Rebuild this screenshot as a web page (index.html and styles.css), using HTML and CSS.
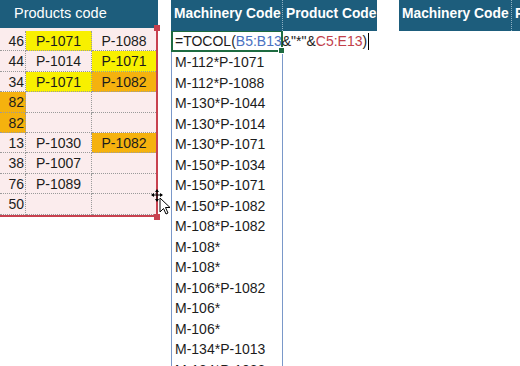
FILE: index.html
```html
<!DOCTYPE html>
<html>
<head>
<meta charset="utf-8">
<link rel="stylesheet" href="styles.css">
</head>
<body>
<div class="sheet">
  <div class="left">
    <div class="lhead">Products code</div>
    <div class="grid">
      <div class="c c1">46</div><div class="c yel">P-1071</div><div class="c">P-1088</div>
      <div class="c c1">44</div><div class="c">P-1014</div><div class="c yel">P-1071</div>
      <div class="c c1">34</div><div class="c yel">P-1071</div><div class="c org">P-1082</div>
      <div class="c c1 org">82</div><div class="c"></div><div class="c"></div>
      <div class="c c1 org">82</div><div class="c"></div><div class="c"></div>
      <div class="c c1">13</div><div class="c">P-1030</div><div class="c org">P-1082</div>
      <div class="c c1">38</div><div class="c">P-1007</div><div class="c"></div>
      <div class="c c1">76</div><div class="c">P-1089</div><div class="c"></div>
      <div class="c c1">50</div><div class="c"></div><div class="c"></div>
    </div>
    <span class="handle h-top"></span>
    <span class="handle h-bot"></span>
    <svg class="cursor" width="22" height="26" viewBox="0 0 22 26">
      <path d="M6 1 L6 12 M1 6 L11 6" stroke="#000" stroke-width="1.2" fill="none"/>
      <path d="M6 0 L4 3 L8 3 Z M6 13 L4 10 L8 10 Z M0 6 L3 4 L3 8 Z M12 6 L9 4 L9 8 Z" fill="#000"/>
      <path d="M9 9 L9 23 L12.5 19.5 L15 25 L17 24 L14.5 18.5 L19 18.5 Z" fill="#fff" stroke="#000" stroke-width="1"/>
    </svg>
  </div>
  <div class="mid">
    <div class="head">
      <div class="hc hc-m">Machinery Code</div>
      <div class="hc hc-p">Product Code</div>
    </div>
    <div class="formula">=TOCOL(<span class="ref-b">B5:B13</span>&amp;"*"&amp;<span class="ref-r">C5:E13</span>)<span class="caret"></span><span class="fill-handle"></span></div>
    <div class="spill">
      <div class="item">M-112*P-1071</div>
      <div class="item">M-112*P-1088</div>
      <div class="item">M-130*P-1044</div>
      <div class="item">M-130*P-1014</div>
      <div class="item">M-130*P-1071</div>
      <div class="item">M-150*P-1034</div>
      <div class="item">M-150*P-1071</div>
      <div class="item">M-150*P-1082</div>
      <div class="item">M-108*P-1082</div>
      <div class="item">M-108*</div>
      <div class="item">M-108*</div>
      <div class="item">M-106*P-1082</div>
      <div class="item">M-106*</div>
      <div class="item">M-106*</div>
      <div class="item">M-134*P-1013</div>
      <div class="item">M-134*P-1082</div>
    </div>
  </div>
  <div class="right">
    <div class="head">
      <div class="hc hc-m">Machinery Code</div>
      <div class="hc hc-p">Product Code</div>
    </div>
  </div>
</div>
</body>
</html>
```
FILE: styles.css
```css
html, body {
  margin: 0;
  padding: 0;
  background: #fff;
  width: 520px;
  height: 366px;
  overflow: hidden;
}
body {
  font-family: "Liberation Sans", Arial, sans-serif;
  font-size: 14px;
  color: #1c1c1c;
}
.sheet {
  display: flex;
  align-items: flex-start;
  height: 366px;
  overflow: hidden;
}
.left {
  position: relative;
  width: 158px;
  flex: none;
}
.lhead {
  height: 28px;
  background: #1d5d7c;
  color: #fff;
  font-size: 14.5px;
  line-height: 26px;
  padding-left: 14px;
  box-sizing: border-box;
}
.grid {
  display: grid;
  grid-template-columns: 26px 66px 64px;
  grid-auto-rows: 20.4px;
  padding-top: 3px;
  border-right: 2px solid #c8414f;
  border-bottom: 2px solid #c8414f;
  background: #fbeced;
}
.c {
  border-right: 1px dotted #9a9a9a;
  border-bottom: 1px dotted #9a9a9a;
  text-align: center;
  line-height: 20px;
  white-space: nowrap;
  overflow: hidden;
}
.c:nth-child(3n) { border-right: none; }
.c1 {
  text-align: right;
  padding-right: 1px;
  direction: rtl;
}
.yel { background: #f8f000; }
.org { background: #f5b20e; }
.handle {
  position: absolute;
  width: 6px;
  height: 6px;
  background: #c8414f;
}
.h-top { right: -2px; top: 25px; }
.h-bot { right: -2px; bottom: -3px; }
.cursor {
  position: absolute;
  left: 151px;
  top: 189px;
}
.mid {
  margin-left: 13px;
  width: 206px;
  flex: none;
  display: flex;
  flex-direction: column;
}
.head {
  display: flex;
  height: 31px;
  background: #1d5d7c;
  color: #fff;
  font-weight: 700;
  font-size: 13.8px;
  line-height: 28px;
}
.hc {
  flex: none;
  white-space: nowrap;
  overflow: hidden;
  box-sizing: border-box;
  padding-left: 3px;
}
.hc-m {
  width: 112px;
  border-right: 1px dotted #8fb0c2;
}
.hc-p { width: 94px; }
.formula {
  position: relative;
  height: 21px;
  box-sizing: border-box;
  width: 112px;
  border: 2px solid #1e6b41;
  border-top-width: 1px;
  padding-left: 2px;
  line-height: 19px;
  white-space: nowrap;
  overflow: visible;
}
.fill-handle {
  position: absolute;
  right: -4px;
  bottom: -4px;
  width: 5px;
  height: 5px;
  background: #1e6b41;
  border: 1px solid #fff;
}
.ref-b { color: #4a72c2; }
.ref-r { color: #c2404a; }
.caret {
  display: inline-block;
  width: 1px;
  height: 17px;
  background: #000;
  vertical-align: -4px;
  margin-left: 1px;
}
.spill {
  width: 112px;
  box-sizing: border-box;
  border-left: 1px solid #7a98c9;
  border-right: 1px solid #7a98c9;
  padding-left: 3px;
}
.item {
  height: 20.5px;
  line-height: 20.5px;
  white-space: nowrap;
}
.right {
  margin-left: 22px;
  width: 207px;
  flex: none;
}
.right .hc-m { width: 113px; }
```
